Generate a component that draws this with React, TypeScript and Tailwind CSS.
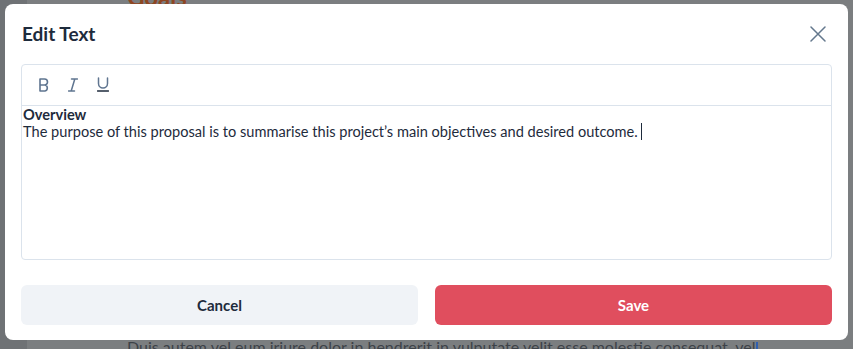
import React from "react";

export default function App() {
  return (
    <div className="relative w-[853px] h-[349px] overflow-hidden bg-[#7b7e80] font-['Lato',sans-serif]">
      {/* dimmed page behind the modal */}
      <div className="flex h-full">
        <div className="w-[27px] bg-[#6f7275]" />
        <div className="flex flex-1 flex-col justify-between pl-[100px]">
          <div className="-mt-[14px] text-[24px] font-bold leading-[22px] text-[#8f4622]">Goals</div>
          <div className="-mb-[8px] text-[16px] leading-[20px] text-[#3d4248]">
            Duis autem vel eum iriure dolor in hendrerit in vulputate velit esse molestie consequat, vel
            <span className="ml-[1px] inline-block h-[14px] w-[2px] bg-[#2f5fb0] align-middle" />
          </div>
        </div>
      </div>

      {/* modal */}
      <div className="absolute left-[5px] top-[4px] flex h-[336px] w-[843px] flex-col rounded-[8px] bg-white px-[16px] pb-[15px]">
        <div className="flex items-center justify-between pt-[17px] pb-[17px]">
          <h2 className="pl-[1px] text-[19px] font-bold leading-[26px] text-[#1e2b3c]">Edit Text</h2>
          <button className="mr-[6px] flex h-[16px] w-[16px] items-center justify-center text-[#64788d]">
            <svg width="16" height="16" viewBox="0 0 16 16" fill="none" stroke="currentColor" strokeWidth="1.5" strokeLinecap="round">
              <path d="M1 1 L15 15 M15 1 L1 15" />
            </svg>
          </button>
        </div>

        <div className="flex h-[196px] flex-col rounded-[4px] border border-[#dbe3ec]">
          <div className="flex h-[41px] items-center gap-[19px] border-b border-[#dbe3ec] pl-[17px] pb-[1px] text-[#5f7590]">
            <svg width="10" height="14" viewBox="0 0 10 14" fill="none" stroke="currentColor" strokeWidth="1.6" strokeLinejoin="round">
              <path d="M1 1 H5.5 A3 3 0 0 1 5.5 7 H1 Z M1 7 H6 A3.1 3.1 0 0 1 6 13 H1 Z" />
            </svg>
            <svg width="10" height="14" viewBox="0 0 10 14" fill="none" stroke="currentColor" strokeWidth="1.5" strokeLinecap="round">
              <path d="M3.5 1 H9.5 M0.5 13 H6.5 M6.8 1 L3.2 13" />
            </svg>
            <svg width="12" height="15" viewBox="0 0 12 15" fill="none" strokeWidth="1.5" strokeLinecap="round">
              <path d="M1.5 1 V6.5 A4.5 4.5 0 0 0 10.5 6.5 V1" stroke="#5f7590" />
              <path d="M0.5 14 H11.5" stroke="#1e2b3c" />
            </svg>
          </div>
          <div className="px-[1px] text-[14.6px] leading-[17px] text-[#1e2b3c]">
            <div className="font-bold">Overview</div>
            <div>
              The purpose of this proposal is to summarise this project’s main objectives and desired outcome.
              <span className="ml-[3px] inline-block h-[17px] w-[1px] bg-[#1e2b3c] align-top" />
            </div>
          </div>
        </div>

        <div className="mt-auto flex gap-[17px]">
          <button className="h-[40px] flex-1 rounded-[6px] bg-[#f0f3f7] text-[15px] font-bold text-[#1e2b3c]">Cancel</button>
          <button className="h-[40px] flex-1 rounded-[6px] bg-[#e04e5e] text-[15px] font-bold text-white">Save</button>
        </div>
      </div>
    </div>
  );
}
